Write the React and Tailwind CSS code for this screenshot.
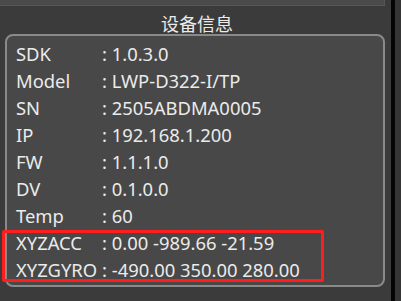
import React from "react";

const rows = [
  ["SDK", "1.0.3.0"],
  ["Model", "LWP-D322-I/TP"],
  ["SN", "2505ABDMA0005"],
  ["IP", "192.168.1.200"],
  ["FW", "1.1.1.0"],
  ["DV", "0.1.0.0"],
  ["Temp", "60"],
  ["XYZACC", "0.00 -989.66 -21.59"],
  ["XYZGYRO", "-490.00 350.00 280.00"],
];

const InfoRow = ({ label, value }) => (
  <div className="flex items-center h-[27px] whitespace-nowrap">
    <span className="w-[86px] shrink-0">{label}</span>
    <span>: {value}</span>
  </div>
);

export default function App() {
  return (
    <div
      className="w-[401px] h-[301px] bg-[#3b3b3b] flex overflow-hidden text-[#ebebeb]"
      style={{ fontFamily: '"Noto Sans", "Noto Sans CJK SC", sans-serif' }}
    >
      {/* main column */}
      <div className="w-[391px] shrink-0 flex flex-col">
        <div className="h-[6px] w-[385px] bg-[#4a4a4a] border-r border-b border-[#575757]" />

        {/* group title */}
        <div className="mt-[8px] h-[20px] flex justify-center items-center text-[18px] leading-[20px] pl-[3px]">
          设备信息
        </div>

        {/* group box */}
        <div className="relative ml-[5px] w-[380px] h-[253px] border-2 border-[#8a8a8a] rounded-[8px] bg-[#484848] pl-[9px] pt-[4px] text-[18.4px] leading-[22px]">
          {rows.map(([label, value]) => (
            <InfoRow key={label} label={label} value={value} />
          ))}

          {/* highlight annotation */}
          <div className="absolute left-[-5px] top-[194px] w-[322px] h-[52px] border-[3px] border-[#ff1d1d] rounded-[2px]" />
        </div>
      </div>

      <div className="w-[4px] shrink-0 bg-[#050505]" />
      <div className="flex-1 bg-[#353535]" />
    </div>
  );
}
